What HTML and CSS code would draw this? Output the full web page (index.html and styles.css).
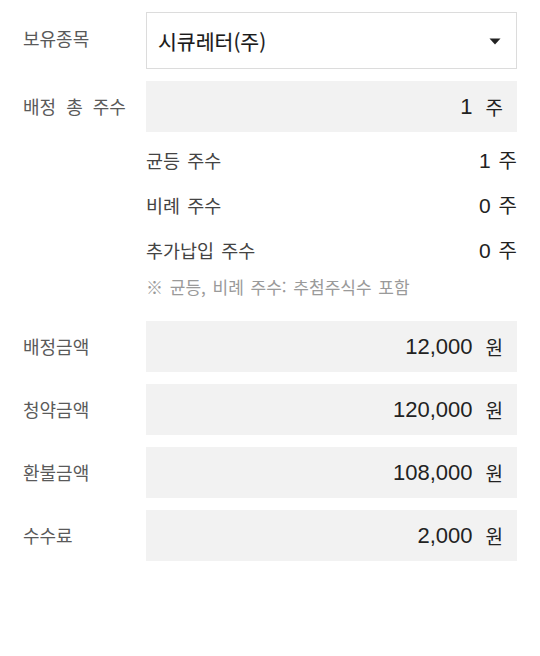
FILE: index.html
```html
<!DOCTYPE html>
<html lang="ko">
<head>
<meta charset="utf-8">
<link rel="stylesheet" href="styles.css">
</head>
<body>
<div class="form">
  <div class="row row-select">
    <div class="label">보유종목</div>
    <div class="select">
      <span class="select-text">시큐레터(주)</span>
      <svg class="caret" width="12" height="7" viewBox="0 0 12 7"><path d="M0.5 0.5 H11.5 L6 6.5 Z" fill="#222"/></svg>
    </div>
  </div>

  <div class="row row-box">
    <div class="label">배정 총 주수</div>
    <div class="box"><span class="num">1</span><span class="unit">주</span></div>
  </div>

  <div class="sub">
    <div class="sub-row"><span class="sub-label">균등 주수</span><span class="sub-val"><span class="num">1</span><span class="unit">주</span></span></div>
    <div class="sub-row"><span class="sub-label">비례 주수</span><span class="sub-val"><span class="num">0</span><span class="unit">주</span></span></div>
    <div class="sub-row"><span class="sub-label">추가납입 주수</span><span class="sub-val"><span class="num">0</span><span class="unit">주</span></span></div>
    <div class="note">※ 균등, 비례 주수: 추첨주식수 포함</div>
  </div>

  <div class="amounts">
    <div class="row">
      <div class="label">배정금액</div>
      <div class="box"><span class="num">12,000</span><span class="unit">원</span></div>
    </div>
    <div class="row">
      <div class="label">청약금액</div>
      <div class="box"><span class="num">120,000</span><span class="unit">원</span></div>
    </div>
    <div class="row">
      <div class="label">환불금액</div>
      <div class="box"><span class="num">108,000</span><span class="unit">원</span></div>
    </div>
    <div class="row">
      <div class="label">수수료</div>
      <div class="box"><span class="num">2,000</span><span class="unit">원</span></div>
    </div>
  </div>
</div>
</body>
</html>
```

FILE: styles.css
```css
* { box-sizing: border-box; }
html, body { margin: 0; padding: 0; background: #fff; }
body {
  font-family: "Noto Sans CJK KR", "Noto Sans", sans-serif;
  color: #222;
}
.form {
  padding: 12px 23px 0 23px;
  display: flex;
  flex-direction: column;
}
.row {
  display: flex;
  align-items: center;
}
.label {
  width: 123px;
  flex: none;
  font-size: 18px;
  color: #5a5a5a;
  line-height: 24px;
  word-spacing: 5px;
  white-space: nowrap;
  margin-top: -2px;
}
.row-select .label { margin-top: -5px; }
.select {
  flex: 1;
  height: 57px;
  border: 1px solid #dcdcdc;
  display: flex;
  align-items: center;
  justify-content: space-between;
  padding: 0 15px 0 11px;
}
.select-text {
  font-size: 20.5px;
  color: #1a1a1a;
  -webkit-text-stroke: 0.15px #1a1a1a;
}
.caret { display: block; margin-top: 1px; }
.row-box { margin-top: 12px; }
.box {
  flex: 1;
  height: 51px;
  background: #f2f2f2;
  display: flex;
  align-items: center;
  justify-content: flex-end;
  padding-right: 14px;
}
.num {
  font-family: "Liberation Sans", Arial, sans-serif;
  font-size: 22px;
  color: #222;
}
.unit {
  font-family: "Noto Sans CJK KR", sans-serif;
  font-size: 19px;
  color: #222;
  margin-left: 13px;
}
.sub {
  margin-left: 123px;
  margin-top: 5px;
}
.sub-row {
  height: 45px;
  display: flex;
  align-items: center;
  justify-content: space-between;
}
.sub-label {
  font-size: 18.5px;
  color: #444;
  word-spacing: 2px;
}
.sub-val .num { font-size: 21px; }
.sub-val .unit { font-size: 20px; margin-left: 8px; }
.note {
  margin-top: 4px;
  font-size: 17px;
  line-height: 22px;
  color: #9a9a9a;
  word-spacing: 2px;
}
.amounts {
  margin-top: 23px;
  display: flex;
  flex-direction: column;
  gap: 12px;
}
```
